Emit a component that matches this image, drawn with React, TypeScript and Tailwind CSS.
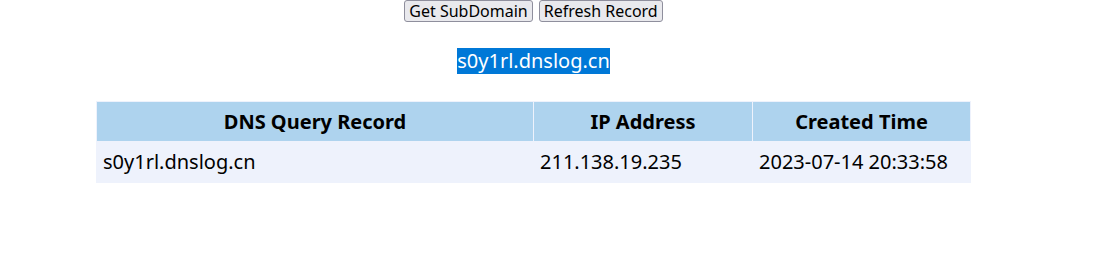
import React from 'react';

const rows = [
	{ domain: 's0y1rl.dnslog.cn', ip: '211.138.19.235', time: '2023-07-14 20:33:58' },
];

export default function App() {
	return (
		<div className="w-[1067px] bg-white text-center text-black font-['Noto_Sans','Open_Sans',sans-serif]">
			<div className="flex justify-center gap-[6px]">
				<button className="h-[22px] px-[4px] text-[16px] leading-[20px] bg-[#e9e9ed] border border-[#8f8f9d] rounded-[3px]">
					Get SubDomain
				</button>
				<button className="h-[22px] px-[4px] text-[16px] leading-[20px] bg-[#e9e9ed] border border-[#8f8f9d] rounded-[3px]">
					Refresh Record
				</button>
			</div>
			<div className="mt-[26px] h-[26px]">
				<span className="bg-[#0078d7] text-white text-[20px] leading-[26px] inline-block">s0y1rl.dnslog.cn</span>
			</div>
			<table className="mx-auto mt-[27px] w-[875px] border-separate border-spacing-[1px] bg-[#eef2fc] text-[20px]">
				<thead>
					<tr className="bg-[#aed3ee] h-[39px]">
						<th className="w-[436px] font-bold">DNS Query Record</th>
						<th className="w-[218px] font-bold">IP Address</th>
						<th className="font-bold">Created Time</th>
					</tr>
				</thead>
				<tbody>
					{rows.map((r) => (
						<tr key={r.domain} className="h-[40px]">
							<td className="text-left pl-[6px]">{r.domain}</td>
							<td className="text-left pl-[6px]">{r.ip}</td>
							<td className="text-left pl-[6px]">{r.time}</td>
						</tr>
					))}
				</tbody>
			</table>
		</div>
	);
}
